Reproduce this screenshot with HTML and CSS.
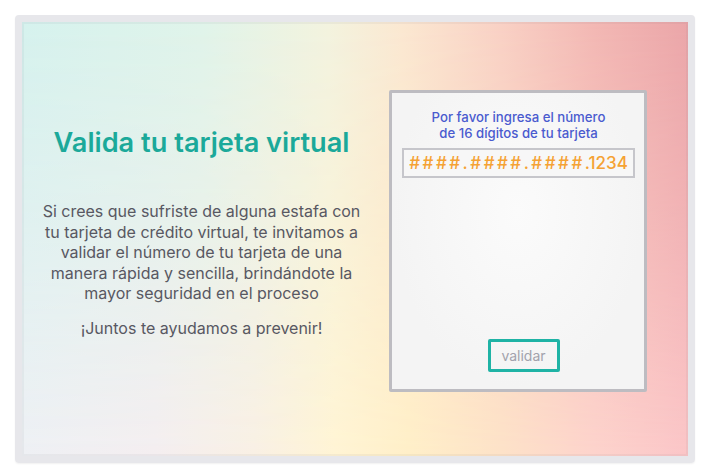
FILE: index.html
```html
<!DOCTYPE html>
<html lang="es">
<head>
<meta charset="utf-8">
<title>Valida tu tarjeta virtual</title>
<link rel="stylesheet" href="styles.css">
</head>
<body>
<div class="frame">
  <div class="panel">
    <div class="intro">
      <h1 class="title">Valida tu tarjeta virtual</h1>
      <p class="copy">Si crees que sufriste de alguna estafa con tu tarjeta de crédito virtual, te invitamos a validar el número de tu tarjeta de una manera rápida y sencilla, brindándote la mayor seguridad en el proceso</p>
      <p class="copy motto">¡Juntos te ayudamos a prevenir!</p>
    </div>
    <div class="card">
      <p class="card-label">Por favor ingresa el número<br>de 16 dígitos de tu tarjeta</p>
      <div class="field"><span class="mask">####.####.####</span>.1234</div>
      <div class="actions"><button class="btn" type="button">validar</button></div>
    </div>
  </div>
</div>
</body>
</html>
```
FILE: styles.css
```css
* { box-sizing: border-box; }
html, body { margin: 0; padding: 0; background: #ffffff; }
body { font-family: Inter, "Liberation Sans", sans-serif; }

.frame {
  margin: 15px;
  width: 680px;
  height: 448px;
  border: 7px solid #e7e7eb;
  border-radius: 4px;
  box-shadow: 0 1px 2px rgba(0,0,0,0.06);
}

.panel {
  position: relative;
  height: 100%;
  display: flex;
  align-items: flex-start;
  padding-right: 41px;
  background: linear-gradient(to right, #d6f2ee 0%, #e0f4ea 27%, #f3f3df 46%, #fbe8d2 57%, #f9d1c5 72%, #f3b8b4 86%, #eba6a9 100%);
  box-shadow: inset 0 0 0 2px rgba(110,120,130,0.07);
}
.panel::before {
  content: "";
  position: absolute;
  inset: 0;
  background: linear-gradient(to right, #eef0f4 0%, #f4eef0 20%, #f9f0e4 35%, #fff4d4 47%, #ffefc8 58%, #fde2c8 72%, #fdd3cc 86%, #fbc6c8 100%);
  -webkit-mask-image: linear-gradient(to bottom, transparent 0%, rgba(0,0,0,0.35) 40%, #000 100%);
  mask-image: linear-gradient(to bottom, transparent 0%, rgba(0,0,0,0.35) 40%, #000 100%);
  box-shadow: inset 0 0 0 2px rgba(110,120,130,0.07);
}

.intro {
  position: relative;
  flex: 1;
  padding: 105px 22px 0 14px;
  text-align: center;
  color: #585862;
}
.title {
  margin: 0 -10px;
  font-size: 27.2px;
  line-height: 32px;
  font-weight: 600;
  color: #1ba99a;
}
.copy {
  margin: 42px 0 0;
  font-size: 16px;
  line-height: 20.5px;
}
.copy.motto { margin-top: 14.5px; }

.card {
  position: relative;
  margin-top: 68px;
  width: 258px;
  height: 302px;
  border: 3px solid #bdbcc1;
  border-radius: 2px;
  background: radial-gradient(ellipse at 50% 40%, #fbfbfb 0%, #f4f4f4 70%);
  display: flex;
  flex-direction: column;
  padding: 16px 9px 17px 10px;
}
.card-label {
  margin: 0;
  text-align: center;
  font-size: 13.2px;
  line-height: 16px;
  font-weight: 500;
  color: #4a5bcf;
}
.field {
  margin-top: 7px;
  height: 30px;
  border: 2px solid #c6c6cb;
  background: #f7f7f7;
  color: #f5a233;
  font-size: 17px;
  font-weight: 500;
  line-height: 26px;
  text-align: center;
  white-space: nowrap;
}
.mask { letter-spacing: 2.5px; }
.actions {
  margin-top: auto;
  display: flex;
  justify-content: center;
  padding-left: 10px;
}
.btn {
  width: 72px;
  height: 33px;
  border: 3px solid #1fb3a5;
  border-radius: 2px;
  background: transparent;
  color: #a2a2ac;
  font-family: Inter, "Liberation Sans", sans-serif;
  font-size: 14px;
  padding: 0;
}
```
